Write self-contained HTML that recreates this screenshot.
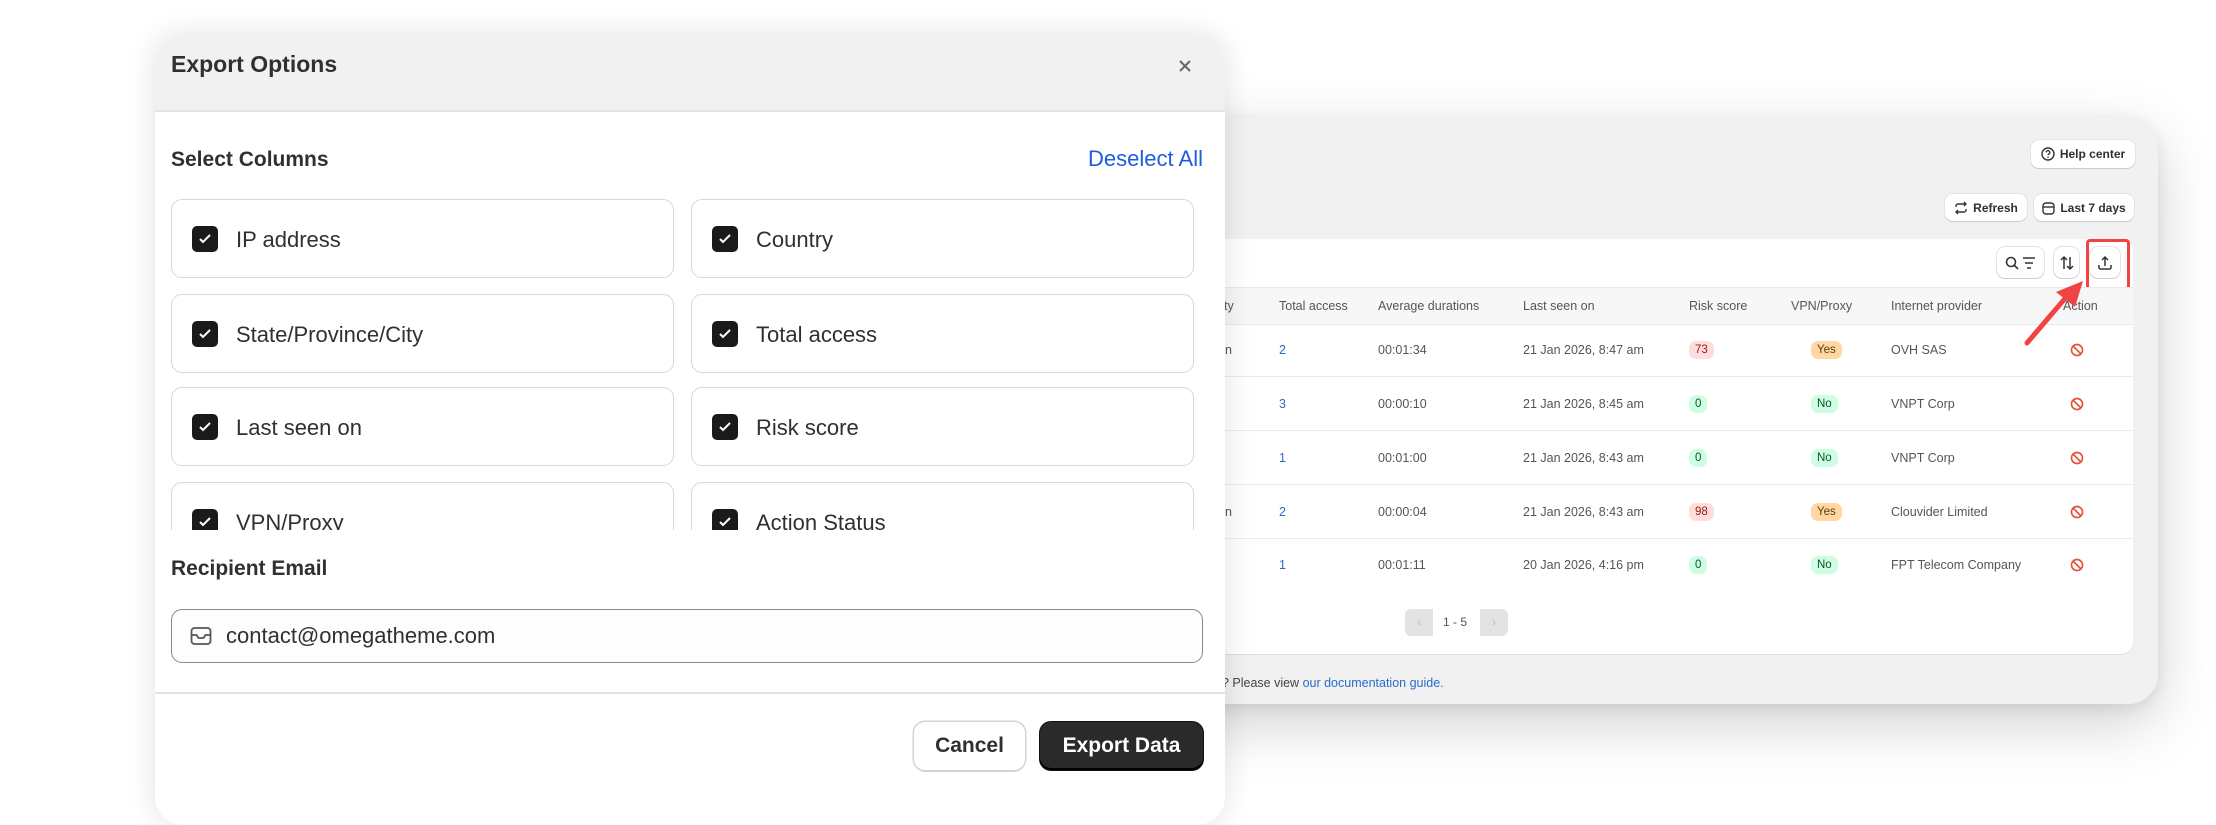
<!DOCTYPE html>
<html><head><meta charset="utf-8"><style>
*{box-sizing:border-box;margin:0;padding:0}
body{width:2216px;height:788px;background:#fff;position:relative;overflow:hidden;font-family:"Liberation Sans",sans-serif;color:#303030}
.abs{position:absolute}
.panel{left:1150px;top:117px;width:1008px;height:587px;background:#f1f1f1;border-radius:30px;box-shadow:0 20px 60px rgba(0,0,0,.18),0 4px 14px rgba(0,0,0,.08)}
.btn{background:#fff;border-radius:8px;box-shadow:0 1px 0 #ccc,0 0 0 1px #e3e3e3;font-size:12px;font-weight:bold;display:flex;align-items:center;justify-content:center;gap:5px;color:#303030}
.card{left:1190px;top:239px;width:943px;height:415px;background:#fff;border-radius:12px;box-shadow:0 1px 0 #ddd}
.th{top:287px;height:38px;left:1190px;width:943px;background:#f7f7f7;border-top:1px solid #e8e8e8;border-bottom:1px solid #e8e8e8}
.t{font-size:12.5px;color:#555;position:absolute;transform:translateY(-50%);white-space:nowrap}
.row{position:absolute;left:1190px;width:943px;border-bottom:1px solid #ebebeb}
.bd{position:absolute;transform:translateY(-50%);font-size:11.5px;padding:3px 6px;border-radius:7px}
.modal{left:155px;top:35px;width:1070px;height:790px;background:#fff;border-radius:28px;box-shadow:0 0 30px rgba(0,0,0,.12);overflow:hidden}
.hdr{height:77px;background:#f1f1f1;border-bottom:2px solid #e3e3e3}
.c{position:absolute;width:503px;height:79px;border:1.5px solid #d8d8d8;border-radius:11px;background:#fff}
.c .cb{position:absolute;left:20px;top:26px;width:26px;height:26px;background:#1a1a1a;border-radius:5px}
.c span{position:absolute;left:64px;top:27px;font-size:22px;color:#303030}
</style></head><body>
<div class="abs panel"></div>
<div class="abs btn" style="left:2031px;top:140px;width:104px;height:28px"><svg width="14" height="14" viewBox="0 0 14 14"><circle cx="7" cy="7" r="6" fill="none" stroke="#333" stroke-width="1.4"/><path d="M5.2 5.4a1.8 1.8 0 1 1 2.4 1.7c-.5.2-.6.5-.6 1.1" fill="none" stroke="#333" stroke-width="1.3"/><circle cx="7" cy="10.3" r=".8" fill="#333"/></svg>Help center</div>
<div class="abs btn" style="left:1945px;top:194px;width:82px;height:27px"><svg width="14" height="14" viewBox="0 0 14 14" fill="none" stroke="#333" stroke-width="1.4"><path d="M2 6V5a2 2 0 0 1 2-2h8M10 1l2 2-2 2M12 8v1a2 2 0 0 1-2 2H2M4 13l-2-2 2-2"/></svg>Refresh</div>
<div class="abs btn" style="left:2034px;top:194px;width:100px;height:27px"><svg width="13" height="14" viewBox="0 0 13 14" fill="none" stroke="#333" stroke-width="1.4"><rect x="1" y="2" width="11" height="11" rx="3"/><path d="M1 6h11"/></svg>Last 7 days</div>
<div class="abs card"></div>
<div class="abs btn" style="left:1997px;top:247px;width:47px;height:31px"><svg width="32" height="16" viewBox="0 0 32 16" fill="none" stroke="#333" stroke-width="1.6"><circle cx="6" cy="7" r="4.5"/><path d="M9.5 10.5 13 14M18 3h12M20 8h8M22 13h4"/></svg></div>
<div class="abs btn" style="left:2054px;top:247px;width:25px;height:31px"><svg width="14" height="16" viewBox="0 0 14 16" fill="none" stroke="#333" stroke-width="1.5"><path d="M4 14V2M1 5l3-3 3 3M10 2v12M7 11l3 3 3-3"/></svg></div>
<div class="abs btn" style="left:2090px;top:247px;width:30px;height:31px"><svg width="14" height="16" viewBox="0 0 14 16" fill="none" stroke="#333" stroke-width="1.5"><path d="M7 11V2M4 5l3-3 3 3M1 10v2.5A1.5 1.5 0 0 0 2.5 14h9a1.5 1.5 0 0 0 1.5-1.5V10"/></svg></div>
<div class="abs" style="left:2086px;top:239px;width:44px;height:51px;border:3px solid #f04444;border-radius:4px"></div>
<div class="abs th"></div>
<div class="t" style="left:1224px;top:306px">ty</div>
<div class="t" style="left:1279px;top:306px">Total access</div>
<div class="t" style="left:1378px;top:306px">Average durations</div>
<div class="t" style="left:1523px;top:306px">Last seen on</div>
<div class="t" style="left:1689px;top:306px">Risk score</div>
<div class="t" style="left:1791px;top:306px">VPN/Proxy</div>
<div class="t" style="left:1891px;top:306px">Internet provider</div>
<div class="t" style="left:2063px;top:306px">Action</div>

<div class="row" style="top:325px;height:52px"></div>
<div class="row" style="top:377px;height:54px"></div>
<div class="row" style="top:431px;height:54px"></div>
<div class="row" style="top:485px;height:54px"></div>

<div class="t" style="left:1225px;top:350px">n</div><div class="t" style="left:1279px;top:350px;color:#2a6bc8">2</div><div class="t" style="left:1378px;top:350px">00:01:34</div><div class="t" style="left:1523px;top:350px">21 Jan 2026, 8:47 am</div><span class="bd" style="left:1689px;top:350px;background:#fdd;color:#8e1f0b">73</span><span class="bd" style="left:1811px;top:350px;background:#ffd6a4;color:#5e4200">Yes</span><div class="t" style="left:1891px;top:350px">OVH SAS</div>
<div class="t" style="left:1279px;top:404px;color:#2a6bc8">3</div><div class="t" style="left:1378px;top:404px">00:00:10</div><div class="t" style="left:1523px;top:404px">21 Jan 2026, 8:45 am</div><span class="bd" style="left:1689px;top:404px;background:#cdfee1;color:#0c5132">0</span><span class="bd" style="left:1811px;top:404px;background:#cdfee1;color:#0c5132">No</span><div class="t" style="left:1891px;top:404px">VNPT Corp</div>
<div class="t" style="left:1279px;top:458px;color:#2a6bc8">1</div><div class="t" style="left:1378px;top:458px">00:01:00</div><div class="t" style="left:1523px;top:458px">21 Jan 2026, 8:43 am</div><span class="bd" style="left:1689px;top:458px;background:#cdfee1;color:#0c5132">0</span><span class="bd" style="left:1811px;top:458px;background:#cdfee1;color:#0c5132">No</span><div class="t" style="left:1891px;top:458px">VNPT Corp</div>
<div class="t" style="left:1225px;top:512px">n</div><div class="t" style="left:1279px;top:512px;color:#2a6bc8">2</div><div class="t" style="left:1378px;top:512px">00:00:04</div><div class="t" style="left:1523px;top:512px">21 Jan 2026, 8:43 am</div><span class="bd" style="left:1689px;top:512px;background:#fdd;color:#8e1f0b">98</span><span class="bd" style="left:1811px;top:512px;background:#ffd6a4;color:#5e4200">Yes</span><div class="t" style="left:1891px;top:512px">Clouvider Limited</div>
<div class="t" style="left:1279px;top:565px;color:#2a6bc8">1</div><div class="t" style="left:1378px;top:565px">00:01:11</div><div class="t" style="left:1523px;top:565px">20 Jan 2026, 4:16 pm</div><span class="bd" style="left:1689px;top:565px;background:#cdfee1;color:#0c5132">0</span><span class="bd" style="left:1811px;top:565px;background:#cdfee1;color:#0c5132">No</span><div class="t" style="left:1891px;top:565px">FPT Telecom Company</div>
<svg class="abs" style="left:2070px;top:343px" width="14" height="246" viewBox="0 0 14 246" fill="none" stroke="#e5533d" stroke-width="1.7"><g><circle cx="7" cy="7" r="5.5"/><path d="M3 3l8 8"/></g><g transform="translate(0,54)"><circle cx="7" cy="7" r="5.5"/><path d="M3 3l8 8"/></g><g transform="translate(0,108)"><circle cx="7" cy="7" r="5.5"/><path d="M3 3l8 8"/></g><g transform="translate(0,162)"><circle cx="7" cy="7" r="5.5"/><path d="M3 3l8 8"/></g><g transform="translate(0,215)"><circle cx="7" cy="7" r="5.5"/><path d="M3 3l8 8"/></g></svg>

<div class="abs" style="left:1405px;top:609px;width:28px;height:27px;background:#e3e3e3;border-radius:6px 0 0 6px;color:#bbb;font-size:12px;text-align:center;line-height:27px">&#8249;</div>
<div class="t" style="left:1443px;top:622px;font-size:12px">1 - 5</div>
<div class="abs" style="left:1480px;top:609px;width:28px;height:27px;background:#e3e3e3;border-radius:0 6px 6px 0;color:#bbb;font-size:12px;text-align:center;line-height:27px">&#8250;</div>
<div class="t" style="left:1215px;top:683px;font-size:12.5px;color:#444">p? Please view <span style="color:#2a6bc8">our documentation guide.</span></div>

<svg class="abs" style="left:2020px;top:275px" width="70" height="75" viewBox="0 0 70 75"><path d="M7 68 L48 20" stroke="#f04444" stroke-width="5" stroke-linecap="round"/><path d="M63 6 L36 17 L55 32 Z" fill="#f04444"/></svg>

<div class="abs modal">
 <div class="hdr"></div>
 <div class="abs" style="left:16px;top:16px;font-size:23px;font-weight:bold;color:#303030">Export Options</div>
 <svg class="abs" style="left:1022px;top:23px" width="16" height="16" viewBox="0 0 16 16" stroke="#666" stroke-width="2"><path d="M3 3l10 10M13 3L3 13"/></svg>
 <div class="abs" style="left:16px;top:113px;font-size:21px;font-weight:bold">Select Columns</div>
 <div class="abs" style="right:22px;top:111px;font-size:22px;color:#1f5ce0">Deselect All</div>
 <div class="abs" style="left:0;top:159px;width:1070px;height:336px;overflow:hidden">
  <div class="c" style="left:16px;top:5px"><div class="cb"></div><svg class="abs" style="left:25px;top:32px" width="16" height="14" viewBox="0 0 16 14" fill="none" stroke="#fff" stroke-width="2"><path d="M3 7l3 3 7-7"/></svg><span>IP address</span></div>
  <div class="c" style="left:536px;top:5px"><div class="cb"></div><svg class="abs" style="left:25px;top:32px" width="16" height="14" viewBox="0 0 16 14" fill="none" stroke="#fff" stroke-width="2"><path d="M3 7l3 3 7-7"/></svg><span>Country</span></div>
  <div class="c" style="left:16px;top:100px"><div class="cb"></div><svg class="abs" style="left:25px;top:32px" width="16" height="14" viewBox="0 0 16 14" fill="none" stroke="#fff" stroke-width="2"><path d="M3 7l3 3 7-7"/></svg><span>State/Province/City</span></div>
  <div class="c" style="left:536px;top:100px"><div class="cb"></div><svg class="abs" style="left:25px;top:32px" width="16" height="14" viewBox="0 0 16 14" fill="none" stroke="#fff" stroke-width="2"><path d="M3 7l3 3 7-7"/></svg><span>Total access</span></div>
  <div class="c" style="left:16px;top:193px"><div class="cb"></div><svg class="abs" style="left:25px;top:32px" width="16" height="14" viewBox="0 0 16 14" fill="none" stroke="#fff" stroke-width="2"><path d="M3 7l3 3 7-7"/></svg><span>Last seen on</span></div>
  <div class="c" style="left:536px;top:193px"><div class="cb"></div><svg class="abs" style="left:25px;top:32px" width="16" height="14" viewBox="0 0 16 14" fill="none" stroke="#fff" stroke-width="2"><path d="M3 7l3 3 7-7"/></svg><span>Risk score</span></div>
  <div class="c" style="left:16px;top:288px"><div class="cb"></div><svg class="abs" style="left:25px;top:32px" width="16" height="14" viewBox="0 0 16 14" fill="none" stroke="#fff" stroke-width="2"><path d="M3 7l3 3 7-7"/></svg><span>VPN/Proxy</span></div>
  <div class="c" style="left:536px;top:288px"><div class="cb"></div><svg class="abs" style="left:25px;top:32px" width="16" height="14" viewBox="0 0 16 14" fill="none" stroke="#fff" stroke-width="2"><path d="M3 7l3 3 7-7"/></svg><span>Action Status</span></div>
 </div>
 <div class="abs" style="left:16px;top:522px;font-size:21px;font-weight:bold">Recipient Email</div>
 <div class="abs" style="left:16px;top:574px;width:1032px;height:54px;border:1.5px solid #8a8a8a;border-radius:11px;background:#fdfdfd">
  <svg class="abs" style="left:18px;top:16px" width="22" height="20" viewBox="0 0 22 20" fill="none" stroke="#555" stroke-width="1.8"><rect x="1.5" y="2" width="19" height="16" rx="3"/><path d="M1.5 9h5l2 3h5l2-3h5"/></svg>
  <div class="abs" style="left:54px;top:13px;font-size:22px;color:#303030">contact@omegatheme.com</div>
 </div>
 <div class="abs" style="left:0;top:657px;width:1070px;height:2px;background:#e3e3e3"></div>
 <div class="abs" style="left:759px;top:687px;width:111px;height:48px;border-radius:11px;background:#fff;box-shadow:0 0 0 1.5px #d4d4d4,0 2px 0 #ccc;font-size:21px;font-weight:bold;display:flex;align-items:center;justify-content:center">Cancel</div>
 <div class="abs" style="left:885px;top:687px;width:163px;height:48px;border-radius:11px;background:#2a2a2a;box-shadow:inset 0 -2px 0 #000,0 0 0 1px #111;color:#fff;font-size:21px;font-weight:bold;display:flex;align-items:center;justify-content:center">Export Data</div>
</div>
</body></html>
